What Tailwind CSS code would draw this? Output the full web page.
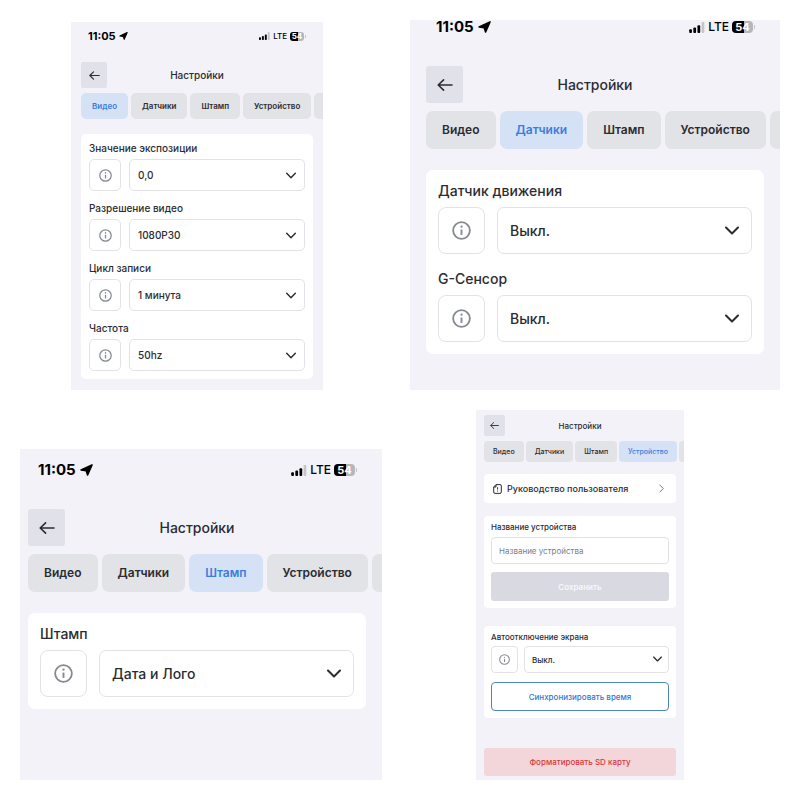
<!DOCTYPE html>
<html lang="ru">
<head>
  <meta charset="UTF-8" />
  <meta name="viewport" content="width=device-width, initial-scale=1.0"/>
  <title>Настройки</title>
  <script src="https://cdn.jsdelivr.net/npm/@tailwindcss/browser@4"></script>
</head>
<body class="bg-white text-[#2b2c31] font-['Inter','Liberation_Sans',sans-serif] font-medium p-5">

  <!-- Shared icons -->
  <svg class="hidden">
    <symbol id="back" viewBox="0 0 16 16"><path d="M15 8H1.5M6.6 2.8L1.2 8L6.6 13.2" fill="none" stroke="currentColor" stroke-width="1.6" stroke-linecap="round" stroke-linejoin="round"/></symbol>
    <symbol id="down" viewBox="0 0 14 9"><path d="M1 1.5L7 7.5L13 1.5" fill="none" stroke="currentColor" stroke-width="2" stroke-linecap="round" stroke-linejoin="round"/></symbol>
    <symbol id="info" viewBox="0 0 20 20"><circle cx="10" cy="10" r="8.8" fill="none" stroke="currentColor" stroke-width="1.9"/><circle cx="10" cy="6" r="1.2" fill="currentColor"/><path d="M10 9V14.6" stroke="currentColor" stroke-width="2"/></symbol>
    <symbol id="location" viewBox="0 0 13 12"><path d="M12 .9L1.1 5.9L6.2 6.7L7.6 11Z" fill="currentColor" stroke="currentColor" stroke-width="1.6" stroke-linejoin="round"/></symbol>
    <symbol id="signal" viewBox="0 0 17 12"><rect x="0" y="8" width="3" height="4" rx="1"/><rect x="4.5" y="6" width="3" height="6" rx="1"/><rect x="9" y="3.5" width="3" height="8.5" rx="1"/><rect x="13.5" y="0" width="3" height="12" rx="1" fill="#c5c5c9"/></symbol>
  </svg>

  <div class="grid grid-cols-[354fr_370fr] gap-9 items-end">

    <!-- Video -->
    <section class="min-w-0 w-full max-w-[252px] mx-auto bg-[#f3f2f8] px-[10px] pb-[11px]">
      <div class="h-10 pt-[7px] px-[7px] flex justify-between items-start text-black">
        <div class="flex items-center gap-[3px] text-[11px] leading-[14px] font-bold">11:05
          <svg class="w-[9px] h-[8px]"><use href="#location"/></svg>
        </div>
        <div class="flex items-center gap-[3px] text-[8px] leading-[14px]">
          <svg class="w-[11px] h-[8px]"><use href="#signal"/></svg>LTE
          <span class="flex items-center gap-px"><span class="w-[14px] h-[9px] rounded-[3px] bg-linear-to-r from-black from-55% to-[#b5b5ba] to-55% text-white text-[8px] leading-[9px] font-bold text-center">54</span><span class="w-px h-[3px] bg-[#c5c5c9]"></span></span>
        </div>
      </div>
      <header class="grid grid-cols-[26px_1fr_26px] items-center">
        <button aria-label="Назад" class="h-[26px] rounded-xs bg-[#e1e1ea] flex items-center justify-center"><svg class="w-[11px] h-[11px]"><use href="#back"/></svg></button>
        <h1 class="text-center text-[10px] leading-[14px]">Настройки</h1>
      </header>
      <nav class="mt-[5px] -mr-[10px] flex gap-[3px] overflow-hidden text-[8px] leading-[26px] font-semibold">
        <button class="shrink-0 h-[26px] px-[11px] rounded-[5px] bg-[#d5e2f6] text-[#3b7ddd]">Видео</button>
        <button class="shrink-0 h-[26px] px-[11px] rounded-[5px] bg-[#e2e3e7]">Датчики</button>
        <button class="shrink-0 h-[26px] px-[11px] rounded-[5px] bg-[#e2e3e7]">Штамп</button>
        <button class="shrink-0 h-[26px] px-[11px] rounded-[5px] bg-[#e2e3e7]">Устройство</button>
        <button aria-label="Ещё" class="shrink-0 h-[26px] w-12 rounded-[5px] bg-[#e2e3e7]"></button>
      </nav>
      <div class="mt-[15px] bg-white rounded-[5px] p-2 flex flex-col gap-[11px] text-[10px]">
        <div>
          <label for="exposure" class="block leading-[12px] mb-[5px]">Значение экспозиции</label>
          <div class="flex gap-2">
            <button aria-label="Справка" class="w-8 h-8 shrink-0 rounded-[5px] border border-[#e3e3e6] text-[#858991] flex items-center justify-center"><svg class="w-[13px] h-[13px]"><use href="#info"/></svg></button>
            <div class="relative flex-1">
              <select id="exposure" class="appearance-none w-full h-8 px-2 rounded-[5px] border border-[#e3e3e6] bg-white"><option>0,0</option></select>
              <svg class="absolute right-[9px] top-[13px] w-[10px] h-[7px] pointer-events-none"><use href="#down"/></svg>
            </div>
          </div>
        </div>
        <div>
          <label for="resolution" class="block leading-[12px] mb-[5px]">Разрешение видео</label>
          <div class="flex gap-2">
            <button aria-label="Справка" class="w-8 h-8 shrink-0 rounded-[5px] border border-[#e3e3e6] text-[#858991] flex items-center justify-center"><svg class="w-[13px] h-[13px]"><use href="#info"/></svg></button>
            <div class="relative flex-1">
              <select id="resolution" class="appearance-none w-full h-8 px-2 rounded-[5px] border border-[#e3e3e6] bg-white"><option>1080P30</option></select>
              <svg class="absolute right-[9px] top-[13px] w-[10px] h-[7px] pointer-events-none"><use href="#down"/></svg>
            </div>
          </div>
        </div>
        <div>
          <label for="loop" class="block leading-[12px] mb-[5px]">Цикл записи</label>
          <div class="flex gap-2">
            <button aria-label="Справка" class="w-8 h-8 shrink-0 rounded-[5px] border border-[#e3e3e6] text-[#858991] flex items-center justify-center"><svg class="w-[13px] h-[13px]"><use href="#info"/></svg></button>
            <div class="relative flex-1">
              <select id="loop" class="appearance-none w-full h-8 px-2 rounded-[5px] border border-[#e3e3e6] bg-white"><option>1 минута</option></select>
              <svg class="absolute right-[9px] top-[13px] w-[10px] h-[7px] pointer-events-none"><use href="#down"/></svg>
            </div>
          </div>
        </div>
        <div>
          <label for="frequency" class="block leading-[12px] mb-[5px]">Частота</label>
          <div class="flex gap-2">
            <button aria-label="Справка" class="w-8 h-8 shrink-0 rounded-[5px] border border-[#e3e3e6] text-[#858991] flex items-center justify-center"><svg class="w-[13px] h-[13px]"><use href="#info"/></svg></button>
            <div class="relative flex-1">
              <select id="frequency" class="appearance-none w-full h-8 px-2 rounded-[5px] border border-[#e3e3e6] bg-white"><option>50hz</option></select>
              <svg class="absolute right-[9px] top-[13px] w-[10px] h-[7px] pointer-events-none"><use href="#down"/></svg>
            </div>
          </div>
        </div>
      </div>
    </section>

    <!-- Sensors -->
    <section class="min-w-0 bg-[#f3f2f8] px-4 pb-9">
      <div class="h-[46px] pl-[10px] pr-[9px] flex justify-between items-start text-black">
        <div class="flex items-center gap-1 text-[15px] leading-[14px] font-bold">11:05
          <svg class="w-[13px] h-[12px]"><use href="#location"/></svg>
        </div>
        <div class="flex items-center gap-[3px] text-[12px] leading-[14px]">
          <svg class="w-[16px] h-[11px]"><use href="#signal"/></svg>LTE
          <span class="flex items-center gap-px"><span class="w-[21px] h-[12px] rounded-[4px] bg-linear-to-r from-black from-55% to-[#b5b5ba] to-55% text-white text-[11px] leading-[12px] font-bold text-center">54</span><span class="w-px h-1 bg-[#c5c5c9]"></span></span>
        </div>
      </div>
      <header class="grid grid-cols-[37px_1fr_37px] items-center">
        <button aria-label="Назад" class="h-[37px] rounded-[3px] bg-[#e1e1ea] flex items-center justify-center"><svg class="w-4 h-4"><use href="#back"/></svg></button>
        <h1 class="text-center text-[14px] leading-[18px]">Настройки</h1>
      </header>
      <nav class="mt-2 -mr-4 flex gap-1 overflow-hidden text-[12px] leading-[38px] font-semibold">
        <button class="shrink-0 h-[38px] px-4 rounded-[7px] bg-[#e2e3e7]">Видео</button>
        <button class="shrink-0 h-[38px] px-4 rounded-[7px] bg-[#d5e2f6] text-[#3b7ddd]">Датчики</button>
        <button class="shrink-0 h-[38px] px-4 rounded-[7px] bg-[#e2e3e7]">Штамп</button>
        <button class="shrink-0 h-[38px] px-4 rounded-[7px] bg-[#e2e3e7]">Устройство</button>
        <button aria-label="Ещё" class="shrink-0 h-[38px] w-16 rounded-[7px] bg-[#e2e3e7]"></button>
      </nav>
      <div class="mt-[21px] bg-white rounded-[7px] p-3 flex flex-col gap-4 text-[14px]">
        <div>
          <label for="motion" class="block leading-[18px] mb-[7px]">Датчик движения</label>
          <div class="flex gap-3">
            <button aria-label="Справка" class="w-[47px] h-[47px] shrink-0 rounded-lg border border-[#e3e3e6] text-[#858991] flex items-center justify-center"><svg class="w-[19px] h-[19px]"><use href="#info"/></svg></button>
            <div class="relative flex-1">
              <select id="motion" class="appearance-none w-full h-[47px] px-3 rounded-[7px] border border-[#e3e3e6] bg-white"><option>Выкл.</option></select>
              <svg class="absolute right-[13px] top-[19px] w-[14px] h-[9px] pointer-events-none"><use href="#down"/></svg>
            </div>
          </div>
        </div>
        <div>
          <label for="gsensor" class="block leading-[18px] mb-[7px]">G-Сенсор</label>
          <div class="flex gap-3">
            <button aria-label="Справка" class="w-[47px] h-[47px] shrink-0 rounded-lg border border-[#e3e3e6] text-[#858991] flex items-center justify-center"><svg class="w-[19px] h-[19px]"><use href="#info"/></svg></button>
            <div class="relative flex-1">
              <select id="gsensor" class="appearance-none w-full h-[47px] px-3 rounded-[7px] border border-[#e3e3e6] bg-white"><option>Выкл.</option></select>
              <svg class="absolute right-[13px] top-[19px] w-[14px] h-[9px] pointer-events-none"><use href="#down"/></svg>
            </div>
          </div>
        </div>
      </div>
    </section>
  </div>

  <div class="mt-5 grid grid-cols-[362fr_398fr] items-end">

    <!-- Stamp -->
    <section class="min-w-0 bg-[#f3f2f8] pl-2 pr-4 pb-[71px]">
      <div class="h-[60px] pt-[14px] pl-[10px] pr-[9px] flex justify-between items-start text-black">
        <div class="flex items-center gap-1 text-[15px] leading-[14px] font-bold">11:05
          <svg class="w-[13px] h-[12px]"><use href="#location"/></svg>
        </div>
        <div class="flex items-center gap-[3px] text-[12px] leading-[14px]">
          <svg class="w-[16px] h-[11px]"><use href="#signal"/></svg>LTE
          <span class="flex items-center gap-px"><span class="w-[21px] h-[12px] rounded-[4px] bg-linear-to-r from-black from-55% to-[#b5b5ba] to-55% text-white text-[11px] leading-[12px] font-bold text-center">54</span><span class="w-px h-1 bg-[#c5c5c9]"></span></span>
        </div>
      </div>
      <header class="grid grid-cols-[37px_1fr_37px] items-center">
        <button aria-label="Назад" class="h-[37px] rounded-[3px] bg-[#e1e1ea] flex items-center justify-center"><svg class="w-4 h-4"><use href="#back"/></svg></button>
        <h1 class="text-center text-[14px] leading-[18px]">Настройки</h1>
      </header>
      <nav class="mt-2 -mr-4 flex gap-1 overflow-hidden text-[12px] leading-[38px] font-semibold">
        <button class="shrink-0 h-[38px] px-4 rounded-[7px] bg-[#e2e3e7]">Видео</button>
        <button class="shrink-0 h-[38px] px-4 rounded-[7px] bg-[#e2e3e7]">Датчики</button>
        <button class="shrink-0 h-[38px] px-4 rounded-[7px] bg-[#d5e2f6] text-[#3b7ddd]">Штамп</button>
        <button class="shrink-0 h-[38px] px-4 rounded-[7px] bg-[#e2e3e7]">Устройство</button>
        <button aria-label="Ещё" class="shrink-0 h-[38px] w-16 rounded-[7px] bg-[#e2e3e7]"></button>
      </nav>
      <div class="mt-[21px] bg-white rounded-[7px] p-3 text-[14px]">
        <label for="stamp" class="block leading-[18px] mb-[7px]">Штамп</label>
        <div class="flex gap-3">
          <button aria-label="Справка" class="w-[47px] h-[47px] shrink-0 rounded-lg border border-[#e3e3e6] text-[#858991] flex items-center justify-center"><svg class="w-[19px] h-[19px]"><use href="#info"/></svg></button>
          <div class="relative flex-1">
            <select id="stamp" class="appearance-none w-full h-[47px] px-3 rounded-[7px] border border-[#e3e3e6] bg-white"><option>Дата и Лого</option></select>
            <svg class="absolute right-[13px] top-[19px] w-[14px] h-[9px] pointer-events-none"><use href="#down"/></svg>
          </div>
        </div>
      </div>
    </section>

    <!-- Device -->
    <div class="min-w-0 pr-0.5">
      <section class="w-full max-w-[208px] mx-auto bg-[#f3f2f8] px-2 pt-[5px] pb-1 text-[8px]">
        <header class="grid grid-cols-[21px_1fr_21px] items-center">
          <button aria-label="Назад" class="h-[21px] rounded-xs bg-[#e1e1ea] flex items-center justify-center"><svg class="w-[9px] h-[9px]"><use href="#back"/></svg></button>
          <h1 class="text-center leading-[12px]">Настройки</h1>
        </header>
        <nav class="mt-[5px] -mr-2 flex gap-0.5 overflow-hidden text-[7px] leading-[21px]">
          <button class="shrink-0 h-[21px] px-[9px] rounded-sm bg-[#e2e3e7]">Видео</button>
          <button class="shrink-0 h-[21px] px-[9px] rounded-sm bg-[#e2e3e7]">Датчики</button>
          <button class="shrink-0 h-[21px] px-[9px] rounded-sm bg-[#e2e3e7]">Штамп</button>
          <button class="shrink-0 h-[21px] px-[9px] rounded-sm bg-[#d5e2f6] text-[#3b7ddd]">Устройство</button>
          <button aria-label="Ещё" class="shrink-0 h-[21px] w-9 rounded-sm bg-[#e2e3e7]"></button>
        </nav>
        <a href="#" class="mt-3 h-[29px] px-[9px] bg-white rounded-sm flex items-center gap-[5px] text-[9px]">
          <svg class="w-[9px] h-[10px]" viewBox="0 0 9 10" fill="none" stroke="currentColor"><path d="M3 .6H7Q8.3 .6 8.3 2V8Q8.3 9.4 7 9.4H2Q.7 9.4 .7 8V3ZM3 .6V3H.7M4.6 3.2V5.5M4.6 6.6V7.6"/></svg>
          Руководство пользователя
          <svg class="ml-auto mr-[3px] w-[5px] h-[9px]" viewBox="0 0 5 9" fill="none" stroke="#777a82"><path d="M.6 .7L4.3 4.5L.6 8.3"/></svg>
        </a>
        <form class="mt-[13px] bg-white rounded-sm p-[7px]">
          <label for="name" class="block leading-[8px] mb-[6px]">Название устройства</label>
          <input id="name" type="text" placeholder="Название устройства" class="block w-full h-[27px] px-[7px] rounded-sm border border-[#e0e1e5] font-normal placeholder:text-[#7b7f87]" />
          <button type="button" class="mt-2 w-full h-[29px] rounded-[3px] bg-[#d9d9e2] text-[#f7f7fa] font-semibold">Сохранить</button>
        </form>
        <div class="mt-[18px] bg-white rounded-sm p-[7px]">
          <label for="screen" class="block leading-[8px] mb-[5px]">Автоотключение экрана</label>
          <div class="flex gap-[6px]">
            <button aria-label="Справка" class="w-[27px] h-[27px] shrink-0 rounded-sm border border-[#e3e3e6] text-[#858991] flex items-center justify-center"><svg class="w-[11px] h-[11px]"><use href="#info"/></svg></button>
            <div class="relative flex-1">
              <select id="screen" class="appearance-none w-full h-[27px] px-[7px] rounded-sm border border-[#e3e3e6] bg-white"><option>Выкл.</option></select>
              <svg class="absolute right-[7px] top-[10px] w-[9px] h-[6px] pointer-events-none"><use href="#down"/></svg>
            </div>
          </div>
          <button class="mt-[9px] w-full h-[29px] rounded-sm border border-[#4a86c5] text-[#3575d3]">Синхронизировать время</button>
        </div>
        <button class="mt-[30px] block w-full h-7 rounded-[3px] bg-[#f2d6d9] text-[#d9363e]">Форматировать SD карту</button>
      </section>
    </div>
  </div>

</body>
</html>
